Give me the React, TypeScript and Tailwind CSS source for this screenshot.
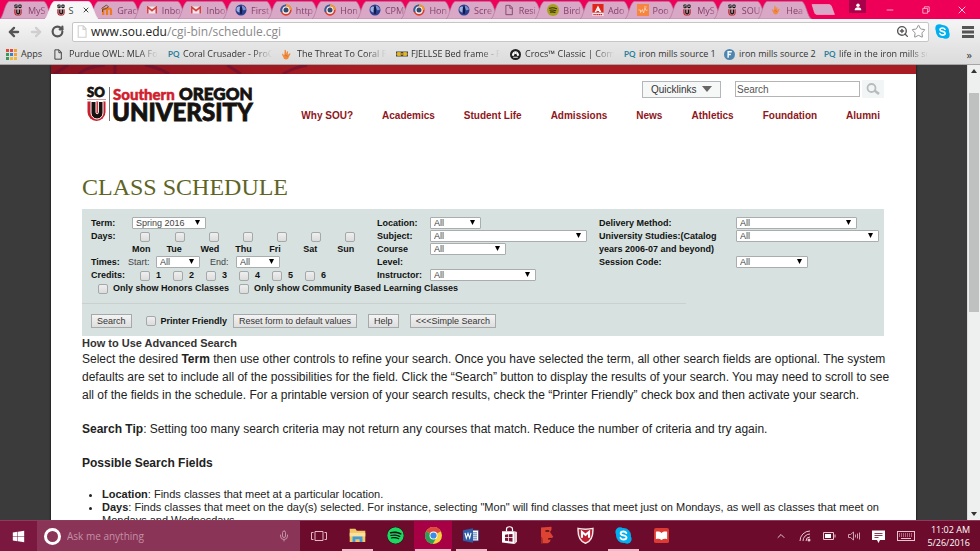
import React, { useState } from 'react';
import { ArrowLeft, ArrowRight, ChevronUp, Mic, Minus, RotateCw, Star, X, ZoomIn } from 'lucide-react';
import { FaSpotify, FaWindows } from 'react-icons/fa';
import clsx from 'clsx';

type IconProps = { className?: string };

/* ---------- Favicons and app icons ---------- */

function SouIcon({ className }: IconProps) {
    return (
        <svg viewBox="0 0 20 32" className={className} aria-hidden="true">
            <rect x="0.5" y="1" width="8.5" height="10" rx="2.5" fill="#111" />
            <rect x="11" y="1" width="8.5" height="10" rx="3" fill="#111" />
            <path d="M3 4.5h6M1 7.5h5" stroke="#fff" strokeWidth="1.4" />
            <rect x="14" y="4" width="2.6" height="4" fill="#fff" />
            <path d="M0 14h20v8a10 9.5 0 0 1-20 0z" fill="#c4202e" />
            <path d="M4 14h5v8.5a1.2 1.2 0 0 0 2.4 0V14H17v8.5a6.5 6.5 0 0 1-13 0z" fill="#111" stroke="#fff" strokeWidth="1.2" />
        </svg>
    );
}

function GmailIcon({ className }: IconProps) {
    return (
        <svg viewBox="0 0 24 18" className={className} aria-hidden="true">
            <rect x="1" y="1" width="22" height="16" rx="1.5" fill="#f3e6ee" />
            <path d="M2.5 17V2.5L12 10.5l9.5-8V17" fill="none" stroke="#d93f3a" strokeWidth="3.4" />
        </svg>
    );
}

function MoodleIcon({ className }: IconProps) {
    return (
        <svg viewBox="0 0 24 24" className={className} aria-hidden="true">
            <path d="M4.5 22V13a3.7 3.7 0 0 1 7.5 0v9m0-9a3.7 3.7 0 0 1 8 0v9" fill="none" stroke="#ee7a1b" strokeWidth="4.4" />
            <path d="M1 9l10-7 4 4-7 4-5 .5V16" fill="none" stroke="#6b4a35" strokeWidth="2" />
        </svg>
    );
}

function GlobeIcon({ className }: IconProps) {
    return (
        <svg viewBox="0 0 24 24" className={className} aria-hidden="true">
            <circle cx="12" cy="12" r="11" fill="#2c3f8f" />
            <path d="M3 8c3-4 7-4 8-1s-3 4-2 8-4 1-6-2z" fill="#9fb0dc" />
            <path d="M14 3c4 1 7 4 8 8l-5 2-3-4z" fill="#7c90cb" />
            <path d="M12 4l2.5 4-1 12h-3l-1-12z" fill="#10184c" />
        </svg>
    );
}

function RingIcon({ className }: IconProps) {
    return (
        <svg viewBox="0 0 24 24" className={className} aria-hidden="true">
            <circle cx="12" cy="12" r="9.5" fill="#f4f0f2" stroke="#d8402c" strokeWidth="3.5" />
            <path d="M12 2.5a9.5 9.5 0 0 0-8.5 13.5" fill="none" stroke="#2a62a8" strokeWidth="3.5" />
            <path d="M12 2.5a9.5 9.5 0 0 1 9.5 9.5" fill="none" stroke="#f0a028" strokeWidth="3.5" />
            <circle cx="12" cy="12" r="5" fill="#34496b" />
        </svg>
    );
}

function DocIcon({ className }: IconProps) {
    return (
        <svg viewBox="0 0 18 24" className={className} aria-hidden="true">
            <path d="M2 1.5h9.5l5 5.5v15.5H2zM11 2v6h5.5" fill="none" stroke="currentColor" strokeWidth="2" />
        </svg>
    );
}

function AdobeIcon({ className }: IconProps) {
    return (
        <svg viewBox="0 0 24 26" className={className} aria-hidden="true">
            <rect width="24" height="19" fill="#e1251b" />
            <path d="M12 3l7.5 15h-4.5l-1.2-3h-4l1.7-3.5h1L12 10l-4 8H4.500z" fill="#fff" />
            <rect y="19" width="24" height="7" fill="#f3e9ee" />
            <path d="M2 23h20" stroke="#c4202e" strokeWidth="2.5" strokeDasharray="3 1" />
        </svg>
    );
}

function OrangeIcon({ className }: IconProps) {
    return (
        <svg viewBox="0 0 24 24" className={className} aria-hidden="true">
            <rect width="24" height="24" fill="#f5853f" />
            <path d="M3 12h4v5l4-6 2 7 3-10 2 5 3-1M14 6h5" fill="none" stroke="#ffd9be" strokeWidth="1.6" />
        </svg>
    );
}

function HandIcon({ className }: IconProps) {
    return (
        <svg viewBox="0 0 20 24" className={className} aria-hidden="true">
            <path d="M6 2c1.5-1 2.5 0 2.8 1.5L10 11l1-5c.5-1.5 2.6-1.3 2.5.5l-.5 6 3.5-3c1.5-1 3 .5 2 2L15 18c-1 3-3 5-6 5s-5-2-6-5l-3-6c-.3-1.6 1.4-2.3 2.4-1L5 14z" fill="#f08a3c" />
            <path d="M6 14c2-1 5 0 6 3" fill="none" stroke="#d9602a" strokeWidth="1.5" />
        </svg>
    );
}

function SpotifyTabIcon({ className }: IconProps) {
    return (
        <svg viewBox="0 0 24 24" className={className} aria-hidden="true">
            <circle cx="12" cy="12" r="12" fill="#a8a020" />
            <path d="M5 8.5c5-1.5 10-1 14 1M6 12.5c4-1 8-.6 11.5 1M7 16.2c3-.7 6-.5 9 .9" fill="none" stroke="#33300a" strokeWidth="2.2" strokeLinecap="round" />
        </svg>
    );
}

function SkypeIcon({ className }: IconProps) {
    return (
        <svg viewBox="0 0 24 24" className={className} aria-hidden="true">
            <circle cx="12" cy="12" r="10.500" fill="#00aff0" />
            <circle cx="7" cy="7" r="6.500" fill="#00aff0" />
            <circle cx="17" cy="17" r="6.500" fill="#00aff0" />
            <path d="M16 8.5C15 6.800 13.500 6.300 12 6.300c-2.300 0-4 1-4 2.700 0 3.700 8.200 2 8.200 5.800 0 1.800-1.900 2.900-4.200 2.900-2 0-3.500-.7-4.300-2.500" fill="none" stroke="#fff" strokeWidth="2.6" strokeLinecap="round" />
        </svg>
    );
}

function AppsIcon({ className }: IconProps) {
    const colors = ['#e04a3b', '#e04a3b', '#f0a13a', '#3c9a56', '#3f7fd0', '#f0a13a', '#3c9a56', '#f0b93a', '#f0b93a'];
    return (
        <svg viewBox="0 0 11 11" className={className} aria-hidden="true">
            {colors.map((c, i) => (
                <rect key={i} x={(i % 3) * 4} y={Math.floor(i / 3) * 4} width="3" height="3" fill={c} />
            ))}
        </svg>
    );
}

function BedIcon({ className }: IconProps) {
    return (
        <svg viewBox="0 0 24 12" className={className} aria-hidden="true">
            <rect x="0" y="1" width="24" height="10" fill="#3f4450" />
            <path d="M0 6h24M3 3h6v6H3zM15 3h6v6h-6z" fill="#e8b91f" stroke="#e8b91f" strokeWidth="1.5" />
            <path d="M8 6h8" stroke="#c98f1a" strokeWidth="3" />
        </svg>
    );
}

function CrocsIcon({ className }: IconProps) {
    return (
        <svg viewBox="0 0 24 24" className={className} aria-hidden="true">
            <circle cx="12" cy="12" r="12" fill="#222" />
            <path d="M4 14c1-6 4-9 8-9s7 3 8 9l-4 1-2-4h-4l-2 4z" fill="#fff" />
            <path d="M7 18h10" stroke="#fff" strokeWidth="2" />
            <circle cx="10" cy="8.5" r="1" fill="#222" />
            <circle cx="14" cy="8.5" r="1" fill="#222" />
        </svg>
    );
}

function FBadgeIcon({ className }: IconProps) {
    return (
        <svg viewBox="0 0 24 24" className={className} aria-hidden="true">
            <circle cx="12" cy="12" r="12" fill="#4f86b0" />
            <path d="M9 19V6h8M9 12h6" fill="none" stroke="#fff" strokeWidth="3" />
        </svg>
    );
}

function ProQuestIcon() {
    return (
        <span className="font-['Lato',sans-serif] text-[8px] font-bold leading-none text-[#1f7f9c]">PQ</span>
    );
}

function ExplorerIcon({ className }: IconProps) {
    return (
        <svg viewBox="0 0 24 22" className={className} aria-hidden="true">
            <path d="M1 2h8l2 3h12v16H1z" fill="#f3c765" />
            <path d="M1 8h22v5H1z" fill="#fbe19b" />
            <path d="M5 21v-8h14v8h-4v-4H9v4z" fill="#3f9be0" />
        </svg>
    );
}

function ChromeIcon({ className }: IconProps) {
    return (
        <svg viewBox="0 0 24 24" className={className} aria-hidden="true">
            <circle cx="12" cy="12" r="12" fill="#f8cf3c" />
            <path d="M12 12L1.6 6A12 12 0 0 1 22.4 6z" fill="#dd4b3e" />
            <path d="M12 12L1.6 6A12 12 0 0 0 11 24l5-9z" fill="#2f9e55" />
            <circle cx="12" cy="12" r="5.6" fill="#fff" />
            <circle cx="12" cy="12" r="4.4" fill="#3c8be8" />
        </svg>
    );
}

function WordIcon({ className }: IconProps) {
    return (
        <svg viewBox="0 0 24 22" className={className} aria-hidden="true">
            <rect x="13" y="3" width="10" height="16" fill="#fff" stroke="#2b579a" />
            <path d="M15 7h6M15 10h6M15 13h6M15 16h6" stroke="#2b579a" strokeWidth="1.2" />
            <path d="M0 3l15-3v22L0 19z" fill="#2f5ca8" />
            <path d="M3 7l2 8 2.5-7 2.5 7 2-8" fill="none" stroke="#fff" strokeWidth="1.7" />
        </svg>
    );
}

function StoreIcon({ className }: IconProps) {
    return (
        <svg viewBox="0 0 22 24" className={className} aria-hidden="true">
            <path d="M7 7V4a4 3 0 0 1 8 0v3" fill="none" stroke="#fff" strokeWidth="1.6" />
            <path d="M1 7h17v17L1 22z" fill="#fff" />
            <path d="M18 7l3 1v13l-3 3z" fill="#e6d3da" />
            <path d="M5 11.500l4-.500v4H5zM10 11l5-.500V15h-5zM5 16h4v4l-4-.500zM10 16h5v5l-5-.800z" fill="#7b1238" />
        </svg>
    );
}

function FaceIcon({ className }: IconProps) {
    return (
        <svg viewBox="0 0 18 24" className={className} aria-hidden="true">
            <path d="M1 2l14-1v4l-2 3 4.500 6.500-3.500 2-1 4.500-3 2H1z" fill="#dc4333" />
            <path d="M7 6.500h5M10.500 17.500l4-1" stroke="#4a0c18" strokeWidth="2" />
            <path d="M1 14c2 1 3 4 2.500 9H1z" fill="#a52c24" />
        </svg>
    );
}

function McAfeeIcon({ className }: IconProps) {
    return (
        <svg viewBox="0 0 24 24" className={className} aria-hidden="true">
            <path d="M1.500 2c7 1.500 14 1.500 21 0 .5 11-2 18-10.500 21C3.500 20 1 13 1.500 2z" fill="#c01f33" stroke="#eee" strokeWidth="2" />
            <path d="M7 15V7l5 4 5-4v8" fill="none" stroke="#fff" strokeWidth="3" />
        </svg>
    );
}

function BookIcon({ className }: IconProps) {
    return (
        <svg viewBox="0 0 24 24" className={className} aria-hidden="true">
            <rect width="24" height="24" rx="3" fill="#dc3a32" />
            <path d="M3 6c3-1 6-1 9 2 3-3 6-3 9-2v12c-3-1-6-1-9 1-3-2-6-2-9-1z" fill="#fff" />
        </svg>
    );
}

/* ---------- Browser chrome ---------- */

const TABS = [
    { title: 'MyS', icon: <SouIcon className="h-3 w-2" /> },
    { title: 'S', icon: <SouIcon className="h-3 w-2" />, active: true },
    { title: 'Grac', icon: <MoodleIcon className="size-3" /> },
    { title: 'Inbo', icon: <GmailIcon className="h-2 w-3" /> },
    { title: 'Inbo', icon: <GmailIcon className="h-2 w-3" /> },
    { title: 'First', icon: <GlobeIcon className="size-3" /> },
    { title: 'http', icon: <RingIcon className="size-3" /> },
    { title: 'Hon', icon: <RingIcon className="size-3" /> },
    { title: 'CPM', icon: <GlobeIcon className="size-3" /> },
    { title: 'Hon', icon: <RingIcon className="size-3" /> },
    { title: 'Scre', icon: <GlobeIcon className="size-3" /> },
    { title: 'Resi', icon: <DocIcon className="h-3 w-2 text-[#7c4466]" /> },
    { title: 'Bird', icon: <SpotifyTabIcon className="size-3" /> },
    { title: 'Ado', icon: <AdobeIcon className="size-3" /> },
    { title: 'Poo', icon: <OrangeIcon className="size-3" /> },
    { title: 'MyS', icon: <SouIcon className="h-3 w-2" /> },
    { title: 'SOU', icon: <SouIcon className="h-3 w-2" /> },
    { title: 'Hea', icon: <HandIcon className="h-3 w-2" /> },
];

function TabStrip() {
    return (
        <div className="flex h-[19px] items-end bg-[#ee0058] pl-1">
            <div className="flex min-w-0 flex-1">
                {TABS.map((t, i) => (
                    <button
                        key={i}
                        type="button"
                        className={clsx(
                            'relative flex h-[18px] min-w-0 flex-1 basis-0 items-center gap-1 pl-2 text-[9px]',
                            t.active ? 'z-10 text-[#444]' : 'text-[#84406a]'
                        )}
                    >
                        <svg
                            viewBox="0 0 54 18"
                            preserveAspectRatio="none"
                            className="absolute -left-1 top-0 h-full w-[calc(100%+9px)]"
                            aria-hidden="true"
                        >
                            <path
                                d="M0 18C3 17 5 2 9 .5H44C48 1 50 17 54 18z"
                                fill={t.active ? '#f6f6f6' : '#d8a8c6'}
                                stroke={t.active ? '#f6f6f6' : '#b8789f'}
                                strokeWidth="0.7"
                            />
                        </svg>
                        <span className={clsx('relative flex shrink-0 items-center justify-center', !t.active && 'w-3')}>
                            {t.icon}
                        </span>
                        <span
                            className={clsx(
                                'relative whitespace-nowrap leading-[13px]',
                                !t.active && '[mask-image:linear-gradient(90deg,#000_70%,#0006)]'
                            )}
                        >
                            {t.title}
                        </span>
                        {t.active && <X className="relative ml-1 size-2 shrink-0" strokeWidth={3} />}
                    </button>
                ))}
            </div>
            <div className="flex h-full w-[173px] shrink-0 items-center pl-1 text-[#ffc4da]">
                <button type="button" aria-label="New tab">
                    <svg viewBox="0 0 24 11" className="h-[11px] w-6">
                        <path d="M1 .5h17c1.500 0 2 1 2.500 2l3 8H6c-1 0-2-.5-2.500-2z" fill="#d8a8c6" stroke="#f0b8d2" strokeWidth="0.6" />
                    </svg>
                </button>
                <button type="button" aria-label="Profile" className="ml-3.5 flex h-[13px] w-[17px] items-center justify-center self-start bg-[#a8004a]">
                    <svg viewBox="0 0 12 12" className="size-2">
                        <circle cx="6" cy="3.3" r="2.6" fill="#fff" />
                        <path d="M1 11c0-3 2-4.500 5-4.500s5 1.500 5 4.500z" fill="#fff" />
                    </svg>
                </button>
                <button type="button" aria-label="Minimize" className="ml-auto flex w-9 justify-center">
                    <Minus className="size-2.5" strokeWidth={2} />
                </button>
                <button type="button" aria-label="Restore" className="flex w-9 justify-center">
                    <svg viewBox="0 0 10 10" className="size-2">
                        <path d="M1 3h6v6H1zM3 3V1h6v6H7" fill="none" stroke="currentColor" />
                    </svg>
                </button>
                <button type="button" aria-label="Close" className="flex w-9 justify-center">
                    <X className="size-3" strokeWidth={2} />
                </button>
            </div>
        </div>
    );
}

function AddressBar() {
    const [url, setUrl] = useState('www.sou.edu/cgi-bin/schedule.cgi');
    const slash = url.indexOf('/') < 0 ? url.length : url.indexOf('/');

    return (
        <div className="flex h-[25px] items-center bg-gradient-to-b from-[#f6f6f6] to-[#e6e6e6] pl-[7px] pr-1.5 text-[#555]">
            <button type="button" aria-label="Back">
                <ArrowLeft className="size-3.5" strokeWidth={4} />
            </button>
            <button type="button" aria-label="Forward" className="ml-2 text-[#cfcfcf]">
                <ArrowRight className="size-3.5" strokeWidth={4} />
            </button>
            <button type="button" aria-label="Reload" className="ml-2">
                <RotateCw className="size-[13px]" strokeWidth={4} />
            </button>
            <div className="ml-2 flex h-5 min-w-0 flex-1 items-center rounded-[2px] border border-[#c6c6c6] bg-white pl-1 pr-0.5">
                <DocIcon className="h-[13px] w-2.5 text-[#cfcfcf]" />
                <div className="relative ml-1 min-w-0 flex-1 text-[12px] leading-4">
                    <span aria-hidden="true" className="block whitespace-pre text-[#8a8a8a]">
                        <span className="text-[#222]">{url.slice(0, slash)}</span>
                        {url.slice(slash)}
                    </span>
                    <input
                        aria-label="Address"
                        value={url}
                        onChange={(e) => setUrl(e.target.value)}
                        className="absolute inset-0 w-full bg-transparent text-transparent caret-black outline-none"
                    />
                </div>
                <button type="button" aria-label="Zoom">
                    <ZoomIn className="size-[13px]" strokeWidth={2.5} />
                </button>
                <button type="button" aria-label="Bookmark this page" className="ml-0.5">
                    <Star className="size-[15px] text-[#888]" strokeWidth={1.5} />
                </button>
            </div>
            <button type="button" aria-label="Skype" className="ml-1.5">
                <SkypeIcon className="size-[15px]" />
            </button>
            <button type="button" aria-label="Menu" className="ml-3">
                <svg viewBox="0 0 12 12" className="size-3">
                    <path d="M0 1.5h12M0 6h12M0 10.5h12" stroke="#555" strokeWidth="2.8" />
                </svg>
            </button>
        </div>
    );
}

const BOOKMARKS = [
    { title: 'Purdue OWL: MLA For', icon: <DocIcon className="h-[11px] w-2" /> },
    { title: 'Coral Crusader - ProQ', icon: <ProQuestIcon /> },
    { title: 'The Threat To Coral Re', icon: <HandIcon className="h-[11px] w-[9px]" /> },
    { title: 'FJELLSE Bed frame - F', icon: <BedIcon className="h-1.5 w-3" /> },
    { title: 'Crocs™ Classic | Comf', icon: <CrocsIcon className="size-[11px]" /> },
    { title: 'iron mills source 1', icon: <ProQuestIcon />, short: true },
    { title: 'iron mills source 2', icon: <FBadgeIcon className="size-[11px]" />, short: true },
    { title: 'life in the iron mills so', icon: <ProQuestIcon /> },
];

function BookmarksBar() {
    return (
        <div className="flex h-[21px] items-center border-b border-[#a9a3a3] bg-gradient-to-b from-[#e6e6e6] to-[#dcdcdc] pl-1.5 pr-2 text-[9px] text-[#333]">
            <a href="#apps" className="mr-3 flex items-center gap-1">
                <AppsIcon className="size-[11px]" />
                Apps
            </a>
            {BOOKMARKS.map((b, i) => (
                <a key={i} href={'#bookmark-' + i} className="mr-2.5 flex shrink-0 items-center">
                    <span className="flex w-[15px] items-center">{b.icon}</span>
                    <span
                        className={clsx(
                            'whitespace-nowrap',
                            b.short ? 'w-[75px]' : 'w-[89px] [mask-image:linear-gradient(90deg,#000_78%,transparent)]'
                        )}
                    >
                        {b.title}
                    </span>
                </a>
            ))}
            <button type="button" aria-label="More bookmarks" className="ml-auto text-[11px] leading-none">
                »
            </button>
        </div>
    );
}

/* ---------- Web page ---------- */

const NAV = ['Why SOU?', 'Academics', 'Student Life', 'Admissions', 'News', 'Athletics', 'Foundation', 'Alumni'];

function Logo() {
    return (
        <svg viewBox="0 0 172 38" className="h-[38px] w-[172px]" role="img" aria-label="Southern Oregon University">
            <g fontFamily="Lato, sans-serif" fontWeight="900" fill="#15120f" stroke="#15120f" strokeWidth="0.8">
                <text x="4" y="11" fontSize="13">SO</text>
                <text x="30" y="14" fontSize="15" fill="#d0202c" stroke="#d0202c" strokeWidth="0.5">Southern</text>
                <text x="96" y="14" fontSize="17">OREGON</text>
                <text x="29" y="35" fontSize="24">UNIVERSITY</text>
            </g>
            <path d="M4 13.5h19" stroke="#c99" strokeWidth="1" />
            <path d="M4.5 15.5h18V26a9 9 0 0 1-18 0z" fill="#c8202e" />
            <path d="M8 15.5h5v11a1.2 1.2 0 0 0 2.4 0v-11H20V27a6 6 0 0 1-12 0z" fill="#15120f" stroke="#fff" />
            <path d="M26.500 1v34" stroke="#777" strokeWidth="1" />
        </svg>
    );
}

function SiteHeader() {
    return (
        <header>
            <div className="h-[9px] overflow-hidden bg-[#a91c22]">
                <svg viewBox="0 0 320 9" className="h-[9px] w-80" aria-hidden="true">
                    <defs>
                        <linearGradient id="banner" x1="0" x2="1">
                            <stop offset="0" stopColor="#8a1320" />
                            <stop offset="1" stopColor="#a91c22" />
                        </linearGradient>
                    </defs>
                    <rect width="320" height="9" fill="url(#banner)" />
                    <path d="M3 9l14-9M28 9c6-6 14-8 26-9M64 0v9M94 0c10 2 18 5 24 9M176 0l14 9M232 9c8-5 14-7 24-9" fill="none" stroke="#5c0d38" strokeWidth="3" opacity="0.5" />
                </svg>
            </div>
            <div className="flex items-start justify-between pl-8 pr-8">
                <div className="pt-3">
                    <Logo />
                </div>
                <div className="flex flex-col items-end pt-1.5">
                    <div className="flex items-center">
                        <button
                            type="button"
                            className="flex h-[17px] w-[79px] items-center justify-between border border-[#b4b7b9] bg-[#f6f8f8] px-2 text-[10px] text-[#333]"
                        >
                            Quicklinks
                            <svg viewBox="0 0 10 6" className="h-1.5 w-2.5" aria-hidden="true">
                                <path d="M0 0h10L5 6z" fill="#666" />
                            </svg>
                        </button>
                        <input
                            type="text"
                            aria-label="Search"
                            placeholder="Search"
                            className="ml-3.5 h-4 w-[125px] border border-[#b4b4b4] bg-white px-px text-[10px] leading-none placeholder:text-[#555]"
                        />
                        <button type="submit" aria-label="Go" className="ml-0.5 flex h-[18px] w-[22px] items-center justify-center bg-[#f2f5f5]">
                            <svg viewBox="0 0 14 12" className="h-3 w-3.5" fill="none" stroke="#b9bcbc">
                                <circle cx="5.5" cy="5" r="4" strokeWidth="1.8" />
                                <path d="M8.5 7.5l4.500 3.500" strokeWidth="2.6" />
                            </svg>
                        </button>
                    </div>
                    <nav className="mr-1 mt-2.5 flex gap-[29px] text-[10px] font-bold leading-4 text-[#8e1620]">
                        {NAV.map((n) => (
                            <a key={n} href={'#' + n.toLowerCase()}>
                                {n}
                            </a>
                        ))}
                    </nav>
                </div>
            </div>
        </header>
    );
}

function Dropdown({ id, value = 'All', className }: { id: string; value?: string; className: string }) {
    return (
        <span className={clsx('relative inline-block h-3', className)}>
            <select
                id={id}
                className="block h-3 w-full appearance-none rounded-[1px] border border-[#a9adad] bg-white pl-[3px] text-[9px] font-normal leading-[10px] text-[#444]"
            >
                <option>{value}</option>
            </select>
            <svg viewBox="0 0 5 5" className="pointer-events-none absolute right-1.5 top-[3px] size-[5px]" aria-hidden="true">
                <path d="M0 0h5L2.5 5z" fill="#000" />
            </svg>
        </span>
    );
}

function Check({ className }: IconProps) {
    return (
        <input
            type="checkbox"
            className={clsx(
                'size-[10px] shrink-0 appearance-none rounded-[2px] border border-[#a4a8a8] bg-gradient-to-b from-[#efefef] to-[#dcdcdc] checked:bg-[#7aa7e0]',
                className
            )}
        />
    );
}

function FormButton({ children, type = 'button' }: { children: React.ReactNode; type?: 'button' | 'submit' | 'reset' }) {
    return (
        <button
            type={type}
            className="h-3.5 border border-[#a6a9a9] bg-gradient-to-b from-[#f4f4f4] to-[#dedede] px-[5px] text-[9px] font-normal leading-none text-[#333]"
        >
            {children}
        </button>
    );
}

function Field({ id, label, labelWidth, className }: { id: string; label: string; labelWidth: string; className: string }) {
    return (
        <div className="flex items-start">
            <label htmlFor={id} className={clsx('shrink-0', labelWidth)}>
                {label}
            </label>
            <Dropdown id={id} className={className} />
        </div>
    );
}

const DAYS = ['Mon', 'Tue', 'Wed', 'Thu', 'Fri', 'Sat', 'Sun'];

function SearchForm() {
    return (
        <form
            className="bg-[#d6e1e0] px-[9px] py-2 text-[9px] font-bold leading-[13px] text-[#111]"
            onSubmit={(e) => e.preventDefault()}
        >
            <div className="grid grid-cols-[286px_222px_1fr]">
                <div>
                    <div className="flex h-[13px]">
                        <label htmlFor="term" className="w-[41px]">Term:</label>
                        <Dropdown id="term" value="Spring 2016" className="w-[74px]" />
                    </div>
                    <fieldset className="flex">
                        <span className="w-[41px]">Days:</span>
                        <div className="flex gap-4">
                            {DAYS.map((d) => (
                                <label key={d} className="flex flex-col">
                                    <span className="flex h-[13px] items-center pl-2">
                                        <Check />
                                    </span>
                                    {d}
                                </label>
                            ))}
                        </div>
                    </fieldset>
                    <div className="flex h-[13px]">
                        <span className="w-[37px]">Times:</span>
                        <label htmlFor="start" className="w-7 font-normal text-[#444]">Start:</label>
                        <Dropdown id="start" className="w-11" />
                        <label htmlFor="end" className="ml-2.5 w-[26px] font-normal text-[#444]">End:</label>
                        <Dropdown id="end" className="w-11" />
                    </div>
                    <fieldset className="flex">
                        <span className="w-[49px]">Credits:</span>
                        {[1, 2, 3, 4, 5, 6].map((n) => (
                            <label key={n} className="flex w-[33px] items-center gap-1.5">
                                <Check />
                                {n}
                            </label>
                        ))}
                    </fieldset>
                </div>
                <div>
                    <Field id="location" label="Location:" labelWidth="w-[53px]" className="w-[51px]" />
                    <Field id="subject" label="Subject:" labelWidth="w-[53px]" className="w-[157px]" />
                    <Field id="level" label="Course Level:" labelWidth="w-[53px]" className="w-[76px]" />
                    <Field id="instructor" label="Instructor:" labelWidth="w-[53px]" className="w-[106px]" />
                </div>
                <div>
                    <Field id="delivery" label="Delivery Method:" labelWidth="w-[137px]" className="w-[121px]" />
                    <Field
                        id="studies"
                        label="University Studies:(Catalog years 2006-07 and beyond)"
                        labelWidth="w-[137px]"
                        className="w-[143px]"
                    />
                    <Field id="session" label="Session Code:" labelWidth="w-[137px]" className="w-[72px]" />
                </div>
            </div>
            <div className="flex gap-2.5 pl-[7px]">
                <label className="flex items-center gap-[5px]">
                    <Check />
                    Only show Honors Classes
                </label>
                <label className="flex items-center gap-[5px]">
                    <Check />
                    Only show Community Based Learning Classes
                </label>
            </div>
            <hr className="-ml-[9px] mt-2 w-[77%] border-[#c9d0ce]" />
            <div className="mt-2.5 flex items-center">
                <FormButton type="submit">Search</FormButton>
                <label className="ml-3.5 mr-1.5 flex items-center gap-[5px]">
                    <Check />
                    Printer Friendly
                </label>
                <FormButton type="reset">Reset form to default values</FormButton>
                <span className="mx-[11px] flex">
                    <FormButton>Help</FormButton>
                </span>
                <FormButton>&lt;&lt;&lt;Simple Search</FormButton>
            </div>
        </form>
    );
}

function ClassSchedule() {
    return (
        <main className="pl-[31px] pr-8 text-[#222]">
            <h1 className="mt-12 pb-[7px] font-['Liberation_Serif',serif] text-[24px] leading-[30px] text-[#5f6426]">CLASS SCHEDULE</h1>
            <SearchForm />
            <h2 className="text-[11px] font-bold leading-[14px] text-[#333]">How to Use Advanced Search</h2>
            <p className="-mr-4 text-[12px] leading-[18px]">
                Select the desired <b>Term</b> then use other controls to refine your search. Once you have selected the
                term, all other search fields are optional. The system defaults are set to include all of the
                possibilities for the field. Click the “Search” button to display the results of your search. You may
                need to scroll to see all of the fields in the schedule. For a printable version of your search results,
                check the “Printer Friendly” check box and then activate your search.
            </p>
            <p className="mt-4 text-[12px] leading-[18px]">
                <b>Search Tip</b>: Setting too many search criteria may not return any courses that match. Reduce the
                number of criteria and try again.
            </p>
            <h3 className="mt-4 text-[12px] font-bold leading-[18px]">Possible Search Fields</h3>
            <ul className="mt-4 list-disc pl-5 text-[11px] leading-[13px]">
                <li>
                    <b>Location</b>: Finds classes that meet at a particular location.
                </li>
                <li>
                    <b>Days</b>: Finds classes that meet on the day(s) selected. For instance, selecting "Mon" will find
                    classes that meet just on Mondays, as well as classes that meet on Mondays and Wednesdays.
                </li>
            </ul>
        </main>
    );
}

function ScrollBar() {
    return (
        <div className="flex w-[13px] shrink-0 flex-col items-center border-l border-[#ddd] bg-[#eef0ef] py-1" aria-hidden="true">
            <svg viewBox="0 0 6 4" className="h-1 w-1.5">
                <path d="M0 4h6L3 0z" fill="#333" />
            </svg>
            <div className="mt-5 h-[49%] w-2.5 bg-[#bfc1c0]" />
            <svg viewBox="0 0 6 4" className="mt-auto h-1 w-1.5">
                <path d="M0 0h6L3 4z" fill="#333" />
            </svg>
        </div>
    );
}

/* ---------- Windows taskbar ---------- */

const APPS = [
    { name: 'File Explorer', icon: <ExplorerIcon className="h-4 w-[17px]" />, line: 'w-[31px]' },
    { name: 'Spotify', icon: <FaSpotify className="size-[17px] rounded-full bg-[#111] text-[#1ed760]" /> },
    { name: 'Chrome', icon: <ChromeIcon className="size-[17px]" />, line: 'w-9', active: true },
    { name: 'Word', icon: <WordIcon className="h-[15px] w-4" />, line: 'w-[31px]' },
    { name: 'Store', icon: <StoreIcon className="h-[18px] w-[17px]" /> },
    { name: 'Reader', icon: <FaceIcon className="h-[18px] w-3.5" /> },
    { name: 'McAfee', icon: <McAfeeIcon className="size-[17px]" /> },
    { name: 'Skype', icon: <SkypeIcon className="size-[17px]" />, line: 'w-[31px]' },
    { name: 'Books', icon: <BookIcon className="size-[15px]" /> },
];

function Taskbar() {
    return (
        <footer className="flex h-[31px] shrink-0 items-stretch border-t border-[#8f3a5a] bg-[#6c0b2c] text-white">
            <button type="button" aria-label="Start" className="flex w-[37px] items-center justify-center bg-[#7a1840]">
                <FaWindows className="size-[13px]" />
            </button>
            <div className="flex w-[263px] items-center bg-[#8a3557] pl-[7px] pr-2.5">
                <span className="size-[17px] rounded-full border-[3px] border-white" />
                <input
                    type="text"
                    aria-label="Ask me anything"
                    placeholder="Ask me anything"
                    className="ml-1.5 min-w-0 flex-1 bg-transparent text-[10px] placeholder:text-[#c590a6]"
                />
                <Mic className="size-3 text-[#c590a6]" />
            </div>
            <button type="button" aria-label="Task view" className="flex w-[38px] items-center justify-center text-[#e5b8c8]">
                <svg viewBox="0 0 16 12" className="h-3 w-4" fill="none" stroke="currentColor">
                    <path d="M4 1.5h8v9H4zM2.5 2.5h-2v7h2M13.5 2.5h2v7h-2" />
                </svg>
            </button>
            <div className="flex">
                {APPS.map((a) => (
                    <button
                        key={a.name}
                        type="button"
                        aria-label={a.name}
                        className={clsx('flex w-[38px] flex-col items-center', a.active && 'bg-[#a80045]')}
                    >
                        <span className="flex flex-1 items-center">{a.icon}</span>
                        <span className={clsx('h-0.5', a.line && 'bg-[#eeb8c8]', a.line)} />
                    </button>
                ))}
            </div>
            <div className="ml-auto flex items-center gap-3 pr-2.5 text-[#e8c4d0]">
                <ChevronUp className="size-3" />
                <svg viewBox="0 0 12 12" className="size-3" fill="none" stroke="currentColor" aria-label="Wi-Fi">
                    <path d="M1 11A10 10 0 0 1 11 1M4 11a7 7 0 0 1 7-7M7 11a4 4 0 0 1 4-4" />
                    <circle cx="10" cy="10" r="1.5" fill="currentColor" stroke="none" />
                </svg>
                <svg viewBox="0 0 13 8" className="h-2 w-[13px]" fill="none" stroke="currentColor" aria-label="Battery">
                    <path d="M.5.5h10v7h-10zM12 2.500v3" />
                    <path d="M2 2h6v4H2z" fill="#fff" stroke="none" />
                </svg>
                <svg viewBox="0 0 12 10" className="h-2.5 w-3" fill="none" stroke="currentColor" aria-label="Volume">
                    <path d="M.5 3.5h2L5.500 1v8L2.500 6.500h-2zM7.500 3.500v3M9.500 2.500v5M11.500 1.500v7" strokeWidth="0.8" />
                </svg>
                <svg viewBox="0 0 13 13" className="size-[13px]" aria-label="Notifications">
                    <path d="M0 .5h13v9.500H8l-1.500 3L5 10H0z" fill="#fff" />
                    <path d="M2.500 3.500h8M2.500 5.500h8M2.500 7.500h4" stroke="#6c0b2c" strokeWidth="0.8" />
                </svg>
                <svg viewBox="0 0 18 10" className="h-2.5 w-[18px]" fill="none" stroke="currentColor" aria-label="Keyboard">
                    <rect x="0.5" y="0.5" width="17" height="9" />
                    <path d="M2 3h14M2 5h14" strokeDasharray="1 1" />
                    <path d="M4 7.5h10" />
                </svg>
                <div className="text-right text-[9px] leading-[13px] text-white">
                    <div>11:02 AM</div>
                    <div>5/26/2016</div>
                </div>
            </div>
        </footer>
    );
}

export default function App() {
    return (
        <div className="flex h-screen flex-col overflow-hidden font-['Open_Sans',sans-serif]">
            <TabStrip />
            <AddressBar />
            <BookmarksBar />
            <div className="flex min-h-0 flex-1">
                <div className="min-w-0 flex-1 overflow-hidden bg-[#3b3b3b] font-['Liberation_Sans',Arial,sans-serif]">
                    <div className="mx-auto min-h-full max-w-[865px] bg-white shadow-[0_0_2px_#000]">
                        <SiteHeader />
                        <ClassSchedule />
                    </div>
                </div>
                <ScrollBar />
            </div>
            <Taskbar />
        </div>
    );
}
